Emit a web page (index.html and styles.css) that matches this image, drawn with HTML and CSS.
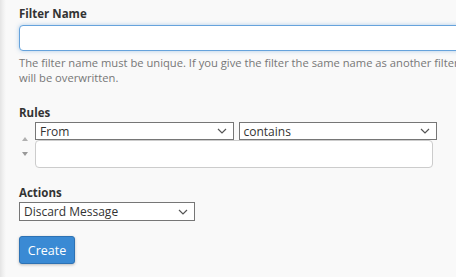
FILE: index.html
```html
<!DOCTYPE html>
<html lang="en">
  <head>
    <meta charset="UTF-8" />
    <meta name="viewport" content="width=device-width, initial-scale=1.0" />
    <title>Create Filter</title>
    <link rel="stylesheet" href="styles.css">
  </head>
  <body>
    <div class="page">
      <div class="form">
        <div class="group">
          <label class="label">Filter Name</label>
          <input class="name-input" type="text" />
          <p class="help">The filter name must be unique. If you give the filter the same name as another filter, the old filter will be overwritten.</p>
        </div>

        <div class="group rules">
          <label class="label">Rules</label>
          <div class="rule-row">
            <div class="order">
              <span class="arrow up"></span>
              <span class="arrow down"></span>
            </div>
            <div class="rule-fields">
              <div class="selects">
                <div class="select from">
                  <span>From</span>
                  <svg width="10" height="6" viewBox="0 0 10 6"><path d="M1 1 L5 5 L9 1" fill="none" stroke="#555" stroke-width="1.2"/></svg>
                </div>
                <div class="select op">
                  <span>contains</span>
                  <svg width="10" height="6" viewBox="0 0 10 6"><path d="M1 1 L5 5 L9 1" fill="none" stroke="#555" stroke-width="1.2"/></svg>
                </div>
              </div>
              <input class="rule-value" type="text" />
            </div>
          </div>
        </div>

        <div class="group actions">
          <label class="label">Actions</label>
          <div class="select action">
            <span>Discard Message</span>
            <svg width="10" height="6" viewBox="0 0 10 6"><path d="M1 1 L5 5 L9 1" fill="none" stroke="#555" stroke-width="1.2"/></svg>
          </div>
        </div>

        <button class="btn-create">Create</button>
      </div>
    </div>
  </body>
</html>
```

FILE: styles.css
```css
html, body {
  margin: 0;
  padding: 0;
  height: 100%;
  overflow: hidden;
}

body {
  font-family: "Open Sans", Arial, sans-serif;
  background-color: #f9f9f9;
  color: #333;
}

.page {
  height: 100%;
  padding: 6px 0 0 19px;
  box-sizing: border-box;
  background: linear-gradient(to right, #e4e4e4 0, #f0f0f0 3px, #f9f9f9 6px);
}

.form {
  width: 520px;
  display: flex;
  flex-direction: column;
  align-items: flex-start;
}

.group {
  display: flex;
  flex-direction: column;
  width: 100%;
}

.label {
  font-size: 11.5px;
  font-weight: bold;
  color: #333;
  line-height: 16px;
  margin-bottom: 3px;
}

.name-input {
  width: 100%;
  height: 26px;
  box-sizing: border-box;
  border: 1px solid #66a3dc;
  border-radius: 4px;
  background: #fff;
  box-shadow: 0 0 4px rgba(102, 163, 220, 0.5);
  outline: none;
}

.help {
  margin: 4px 0 0;
  font-size: 11.2px;
  line-height: 15px;
  color: #777;
  width: 520px;
}

.rules {
  margin-top: 20px;
}

.rules .label {
  margin-bottom: 1px;
}

.rule-row {
  display: flex;
  align-items: flex-start;
  gap: 5px;
}

.order {
  width: 11px;
  box-sizing: border-box;
  padding: 15px 0 0 3px;
  display: flex;
  flex-direction: column;
  gap: 11px;
}

.arrow {
  width: 0;
  height: 0;
  border-left: 3.5px solid transparent;
  border-right: 3.5px solid transparent;
}

.arrow.up {
  border-bottom: 4px solid #b0b0b0;
}

.arrow.down {
  border-top: 4px solid #999;
}

.rule-fields {
  display: flex;
  flex-direction: column;
  width: 402px;
}

.selects {
  display: flex;
  gap: 5px;
}

.select {
  display: flex;
  align-items: center;
  justify-content: space-between;
  height: 18px;
  box-sizing: border-box;
  border: 1px solid #767676;
  background: #fff;
  padding: 0 6px 0 4px;
  font-size: 12px;
  color: #333;
}

.select.from {
  width: 199px;
}

.select.op {
  width: 199px;
}

.rule-value {
  width: 398px;
  height: 28px;
  box-sizing: border-box;
  border: 1px solid #ccc;
  border-radius: 4px;
  background: #fff;
  margin-top: 0;
}

.actions {
  margin-top: 17px;
}

.actions .label {
  margin-bottom: 1px;
}

.select.action {
  width: 176px;
  height: 19px;
}

.btn-create {
  margin-top: 15px;
  width: 56px;
  height: 28px;
  background: #3a8ad4;
  border: 1px solid #2d72b4;
  border-radius: 3px;
  color: #fff;
  font-family: "Open Sans", Arial, sans-serif;
  font-size: 12.5px;
  box-shadow: 0 1px 3px rgba(0, 0, 0, 0.25);
  padding: 0;
}
```
